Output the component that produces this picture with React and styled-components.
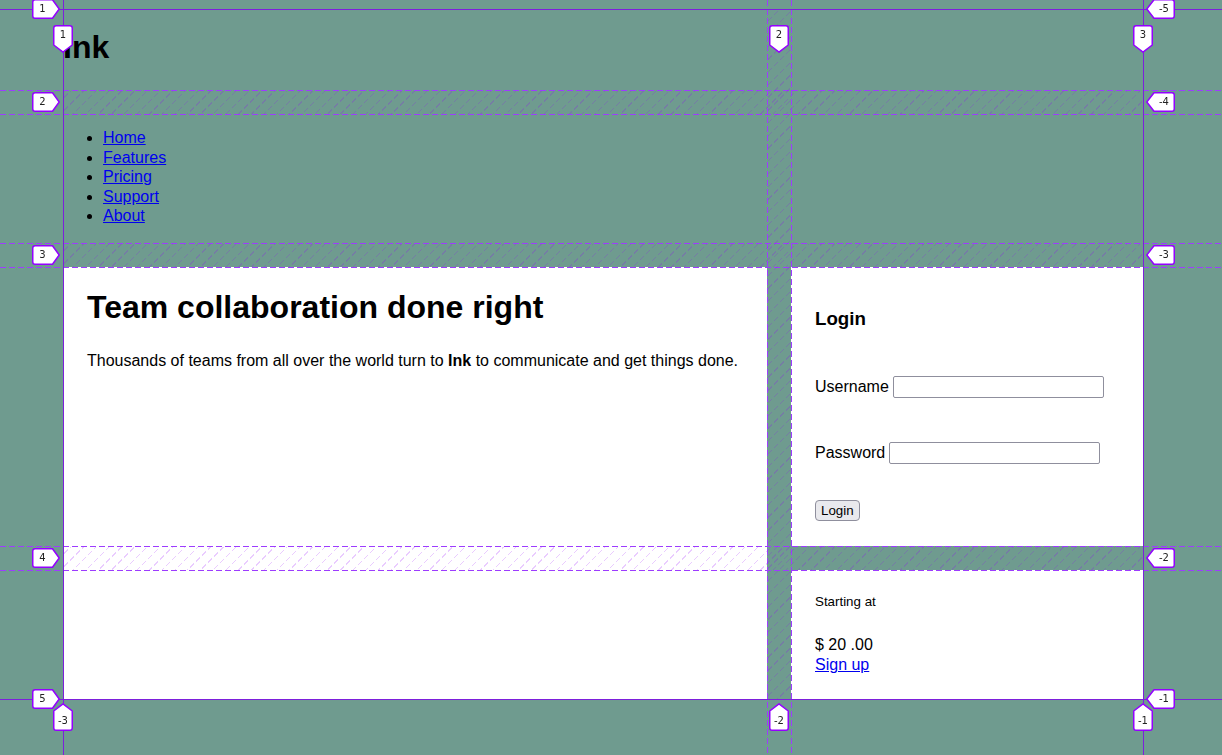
import React from 'react'
import styled, { createGlobalStyle } from 'styled-components'

const GRID = '#7d1fdb'
const DASH = '#9d3cff'

const GlobalStyle = createGlobalStyle`
  html, body {
    margin: 0;
    padding: 0;
    background: #6f9b8f;
    font-family: "Liberation Sans", Arial, sans-serif;
    font-size: 16px;
    line-height: 1.22;
    color: #000;
    overflow: hidden;
  }
  a { color: #0000ee; }
`

const Page = styled.div`
  display: grid;
  width: 1080px;
  margin: 9px 0 0 63px;
  grid-template-columns: 704px 352px;
  grid-template-rows: 81px 129px 279px 129px;
  gap: 24px;
`

const Header = styled.header`
  grid-column: 1 / -1;
  h1 {
    margin: 19px 0;
    font-size: 32px;
    font-weight: bold;
  }
`

const Nav = styled.nav`
  grid-column: 1 / -1;
  ul {
    margin: 14px 0;
    padding-left: 40px;
  }
`

const Card = styled.section`
  background: #fff;
  padding: 24px;
  grid-column: ${p => p.$col};
  grid-row: ${p => p.$row};
`

const Title = styled.h1`
  margin: 0 0 26px;
  font-size: 32px;
  line-height: 1.05;
`

const Lead = styled.p`
  margin: 0;
`

const LoginTitle = styled.h3`
  margin: 16.5px 0 18.7px;
  font-size: 18.72px;
`

const LoginForm = styled.form`
  display: flex;
  flex-direction: column;
  align-items: flex-start;
`

const Field = styled.div`
  display: flex;
  align-items: center;
  height: 22px;
  margin-top: ${p => p.$gap}px;
  label { margin-right: 4px; }
`

const Input = styled.input`
  box-sizing: border-box;
  width: 211px;
  height: 22px;
  border: 1px solid #8f8f9d;
  border-radius: 2px;
  background: #fff;
  padding: 1px 4px;
`

const Button = styled.button`
  margin-top: 36px;
  height: 21px;
  padding: 0 5px;
  border: 1px solid #8f8f9d;
  border-radius: 4px;
  background: #e9e9ed;
  font-family: "Liberation Sans", Arial, sans-serif;
  font-size: 13.33px;
  color: #000;
`

const Small = styled.p`
  margin: 0 0 25px;
  font-size: 13.33px;
`

const Price = styled.div``

/* grid inspector overlay */
const Overlay = styled.div`
  position: fixed;
  inset: 0;
  pointer-events: none;
  overflow: hidden;
`

const HLine = styled.div`
  position: absolute;
  left: 0;
  right: 0;
  height: 1px;
  background: ${p => (p.$dashed
    ? `repeating-linear-gradient(90deg, ${DASH} 0 6px, transparent 6px 9px)`
    : GRID)};
`

const VLine = styled.div`
  position: absolute;
  top: 0;
  bottom: 0;
  width: 1px;
  background: ${p => (p.$dashed
    ? `repeating-linear-gradient(180deg, ${DASH} 0 6px, transparent 6px 9px)`
    : GRID)};
`

const Hatch = styled.div`
  position: absolute;
  background: repeating-linear-gradient(
    -45deg,
    rgba(148, 0, 255, 0.2) 0 1px,
    transparent 1px 9px
  );
  -webkit-mask-image: repeating-linear-gradient(90deg, #000 0 4px, transparent 4px 6px);
  mask-image: repeating-linear-gradient(90deg, #000 0 4px, transparent 4px 6px);
`

const Tag = styled.div`
  position: absolute;
  width: ${p => p.$w}px;
  height: ${p => p.$h}px;
  svg { position: absolute; inset: 0; }
  span {
    position: absolute;
    display: flex;
    align-items: center;
    justify-content: center;
    font-family: "DejaVu Sans", sans-serif;
    font-size: 10px;
    color: #222;
  }
`

const shapes = {
  right: { w: 28, h: 20, d: 'M3 0.75 H20.5 L27.2 10 L20.5 19.25 H3 Q0.75 19.25 0.75 17 V3 Q0.75 0.75 3 0.75 Z', box: { left: 0, top: 0, width: 21, height: 20 } },
  left: { w: 29, h: 20, d: 'M8 0.75 H26 Q28.25 0.75 28.25 3 V17 Q28.25 19.25 26 19.25 H8 L0.8 10 Z', box: { left: 7, top: 0, width: 22, height: 20 } },
  down: { w: 20, h: 28, d: 'M3 0.75 H17 Q19.25 0.75 19.25 3 V20 L10 27.2 L0.75 20 V3 Q0.75 0.75 3 0.75 Z', box: { left: 0, top: 0, width: 20, height: 20 } },
  up: { w: 20, h: 28, d: 'M10 0.8 L19.25 8 V25 Q19.25 27.25 17 27.25 H3 Q0.75 27.25 0.75 25 V8 Z', box: { left: 0, top: 8, width: 20, height: 20 } },
}

function LineTag({ dir, x, y, children }) {
  const s = shapes[dir]
  return (
    <Tag $w={s.w} $h={s.h} style={{ left: x, top: y }}>
      <svg width={s.w} height={s.h} viewBox={`0 0 ${s.w} ${s.h}`}>
        <path d={s.d} fill="#fff" stroke="#9400ff" strokeWidth="1.5" strokeLinejoin="round" />
      </svg>
      <span style={s.box}>{children}</span>
    </Tag>
  )
}

const rows = [9, 102, 255, 558, 699]
const cols = [63, 779, 1143]

function GridOverlay() {
  return (
    <Overlay>
      {[90, 114, 243, 267, 546, 570].map(y => <HLine key={y} $dashed style={{ top: y }} />)}
      {[767, 791].map(x => <VLine key={x} $dashed style={{ left: x }} />)}
      <HLine style={{ top: 9 }} />
      <HLine style={{ top: 699 }} />
      <VLine style={{ left: 63 }} />
      <VLine style={{ left: 1143 }} />

      {[90, 243, 546].map(y => <Hatch key={y} style={{ left: 64, top: y + 1, width: 1079, height: 23 }} />)}
      <Hatch style={{ left: 768, top: 10, width: 23, height: 689 }} />

      {rows.map((y, i) => <LineTag key={'l' + i} dir="right" x={32} y={y - 10}>{i + 1}</LineTag>)}
      {rows.map((y, i) => <LineTag key={'r' + i} dir="left" x={1146} y={y - 10}>{i - 5}</LineTag>)}
      {cols.map((x, i) => <LineTag key={'t' + i} dir="down" x={x - 10} y={25}>{i + 1}</LineTag>)}
      {cols.map((x, i) => <LineTag key={'b' + i} dir="up" x={x - 10} y={703}>{i - 3}</LineTag>)}
    </Overlay>
  )
}

export default function App() {
  return (
    <>
      <GlobalStyle />
      <Page>
        <Header>
          <h1>Ink</h1>
        </Header>
        <Nav>
          <ul>
            <li><a href="#home">Home</a></li>
            <li><a href="#features">Features</a></li>
            <li><a href="#pricing">Pricing</a></li>
            <li><a href="#support">Support</a></li>
            <li><a href="#about">About</a></li>
          </ul>
        </Nav>
        <Card $col="1" $row="3 / 5">
          <Title>Team collaboration done right</Title>
          <Lead>
            Thousands of teams from all over the world turn to <b>Ink</b> to communicate and get things done.
          </Lead>
        </Card>
        <Card $col="2" $row="3">
          <LoginTitle>Login</LoginTitle>
          <LoginForm onSubmit={e => e.preventDefault()}>
            <Field $gap={27}>
              <label htmlFor="username">Username</label>
              <Input id="username" type="text" />
            </Field>
            <Field $gap={44}>
              <label htmlFor="password">Password</label>
              <Input id="password" type="password" />
            </Field>
            <Button type="submit">Login</Button>
          </LoginForm>
        </Card>
        <Card $col="2" $row="4">
          <Small>Starting at</Small>
          <Price>$ 20 .00</Price>
          <a href="#signup">Sign up</a>
        </Card>
      </Page>
      <GridOverlay />
    </>
  )
}
